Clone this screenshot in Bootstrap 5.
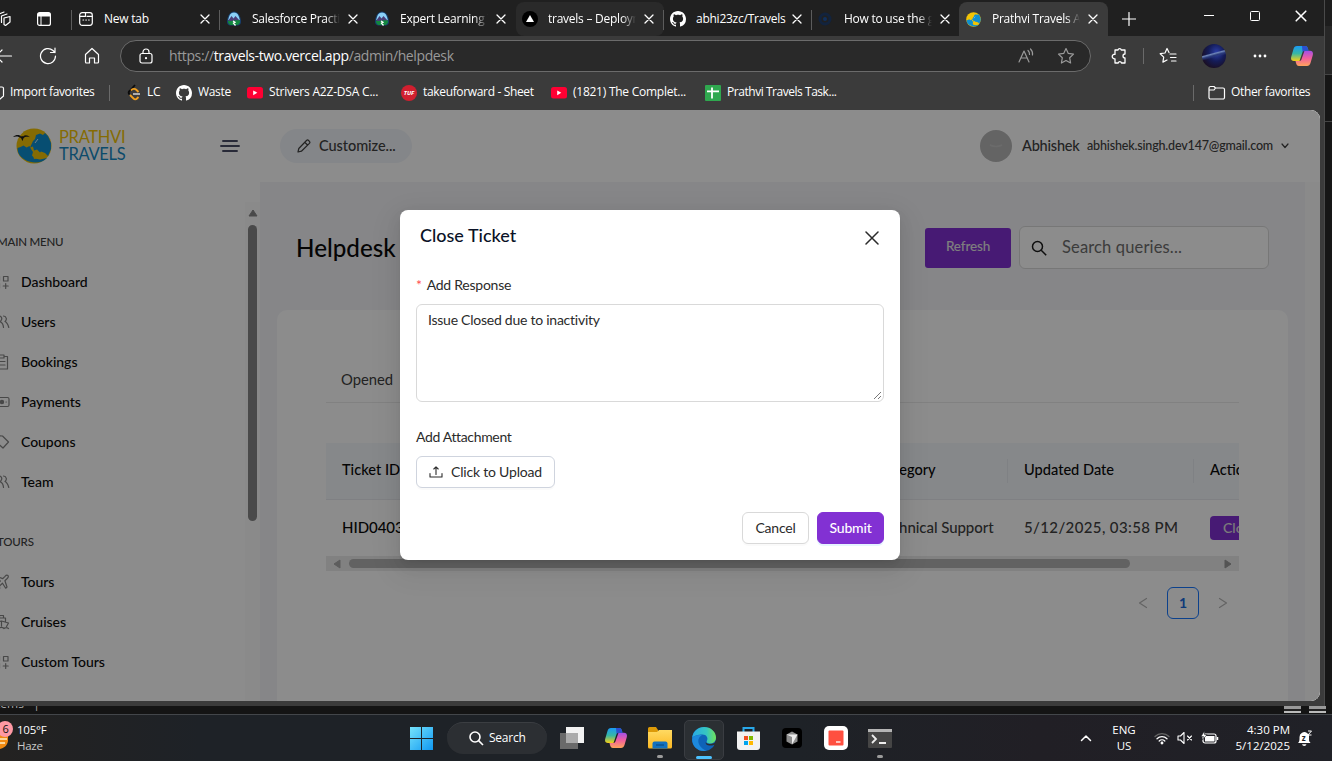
<!DOCTYPE html>
<html lang="en">
<head>
<meta charset="utf-8">
<title>Prathvi Travels Admin</title>
<link href="https://cdn.jsdelivr.net/npm/bootstrap@5.3.0/dist/css/bootstrap.min.css" rel="stylesheet">
<style>
:root{--ui:"Open Sans","Noto Sans",sans-serif;--app:Lato,"Liberation Sans",sans-serif;--purple:#8231d3;--canvas:#f4f5f8}
body{width:1332px;height:761px;overflow:hidden;background:#141414;font-family:var(--ui);font-size:12px;color:#fff;line-height:1.4;letter-spacing:-.25px}
svg{display:block;flex:none}
.ln{fill:none;stroke:currentColor;stroke-width:1.2;stroke-linecap:round;stroke-linejoin:round}
.desktop-area{height:706px}
.browser{width:1325px;background:#3b3b3b;border-right:1px solid #4a4a4a}
.behind{background:#161616}
.behind-a{height:26px;background:#1d1d1d}
.behind-b{height:49px;background:#272727;border-bottom:1px solid #444}
.behind-c{height:47px;border-bottom:1px solid #444}
/* tab strip */
.tabstrip{height:36px;background:#202020}
.lead-icons{width:72px;padding-left:0}
.tab{width:148px;height:34px;margin-top:2px;padding:0 10px 0 6px;position:relative}
.tab+.tab::before,.tab.first::before{content:"";position:absolute;left:-1px;top:8px;width:1px;height:20px;background:#5c5c5c}
.tab.nosep::before{display:none}
.tab.first{padding-left:7px}
.tab.hovered{background:#2a2a2a;border-radius:8px 8px 8px 8px}
.tab.current{background:#3b3b3b;border-radius:8px 8px 0 0;margin-left:-1px;width:149px;padding-left:7px}
.tab-label{width:90px;margin-left:10px;white-space:nowrap;overflow:hidden;-webkit-mask-image:linear-gradient(90deg,#000 74px,transparent 88px)}
.tab-label.full{-webkit-mask-image:none}
.tools{height:38px;margin-top:1px}
.url{width:971px;height:32px;border:1px solid #6b6b6b;border-radius:16px;background:#292929;font-size:14px;letter-spacing:-.38px;color:#9a9a9a;padding-left:17px}
.url b{font-weight:400;color:#fff}
.avatar-pic{width:24px;height:24px;border-radius:50%;background:linear-gradient(165deg,transparent 38%,#6f86b8 42%,#2a3a7a 48%,transparent 56%),radial-gradient(ellipse at 60% 35%,#2c3fa8 0,#141c58 40%,#1a0f24 75%,#0a1238 100%)}
.favs{height:35px;display:grid;grid-template-columns:10px 99px 17px 21px 29px 22px 49px 22px 132px 22px 128px 22px 132px 22px 466px 14px 24px 90px;align-items:center;white-space:nowrap;letter-spacing:-.34px}
.vr-line{width:1px;height:16px;background:#6a6a6a}
/* web page */
.webpage{width:1320px;height:591px;border-radius:0 9px 9px 0;overflow:hidden;position:relative;background:#fff;font-family:var(--app);color:#404040;letter-spacing:0}
.shade{position:absolute;inset:0;background:rgba(0,0,0,.45)}
.topbar{height:72px;background:#fff}
.brand{width:220px;padding-left:12px}
.brand-name{font-family:Lato,sans-serif;font-size:16.5px;line-height:17px;margin-left:6px;letter-spacing:-.3px}
.customize{width:132px;height:34px;border-radius:17px;background:#f1f4f9;font-size:14.5px;letter-spacing:-.05px;font-weight:500;color:#404040;margin-left:40px}
.user-dot{width:32px;height:32px;border-radius:50%;background:#b7b7b7}
.u-name{width:65px;font-size:14.5px;font-weight:500;letter-spacing:-.2px}
.u-mail{width:197px;font-size:12.5px;font-weight:500;letter-spacing:-.17px}
.side{width:260px;padding-top:20px;overflow:hidden}
.side-head{height:60px;padding-top:21px;font-size:11.5px;color:#404040;font-weight:500;letter-spacing:-.2px}
.side-item{height:40px;font-size:14px;font-weight:500;color:#0a0a0a}
.side-item span{margin-top:-1px;letter-spacing:-.04px}
.side-item svg{margin-left:-7px;margin-right:11px;color:#848484}
.side-scroll{width:15px;height:100%;background:#fcfcfc;padding-top:7px}
.side-thumb{width:9px;height:296px;background:#888;border-radius:5px;margin-top:8px}
.canvas{width:1045px;background:var(--canvas);padding:44px 36px 0}
.page-scroll{width:15px;background:#fbfbfb}
.page-title{font-size:24.2px;font-weight:500;color:#0a0a0a}
.btn-refresh{width:86px;height:40px;background:var(--purple);color:#e6e6e6;border-radius:3px;font-size:13.5px;letter-spacing:-.15px;font-weight:500;margin-top:2px}
.searchbox{width:250px;height:43px;background:#fff;border:1px solid #d9d9d9;border-radius:6px;font-size:16.5px;letter-spacing:.15px;color:#6d6d6d;padding-left:11px}
.panel{margin:41px -19px 0;height:400px;background:#fff;border-radius:10px;padding:47px 49px 0}
.tabs-line{height:46px;border-bottom:1px solid #ececec;font-size:14.8px;padding-left:15px}
.scroller{overflow:hidden;margin-top:40px;width:913px}
.tickets{width:1000px;table-layout:fixed;margin:0;border-collapse:separate;border-spacing:0;white-space:nowrap}
.tickets th{height:57px;padding:0 16px 1px;background:#f5f8fc;border-bottom:1px solid #e8eaee;font-size:14.6px;font-weight:500;color:#0a0a0a;position:relative;vertical-align:middle}
.tickets th+th::before{content:"";position:absolute;left:-1px;top:16px;height:24px;width:1px;background:#e8ebf0}
.tickets td{height:56px;padding:0 16px;font-size:15px;color:#404040;font-weight:500;vertical-align:middle}
.tickets .cell-text{padding-bottom:2px;letter-spacing:-.05px}
.tickets .stamp{letter-spacing:.37px}
.tickets td.ticket-no{color:#0a0a0a}
.btn-row{width:80px;height:24px;background:var(--purple);color:#e0e0e0;border-radius:4px;padding-left:13px;font-size:14px;line-height:24px}
.hscroll{height:15px;background:#ececec;padding:0 7px}
.hthumb{width:781px;height:9px;border-radius:5px;background:#b2b2b2}
.pager{padding:16px 0 0}
.pager-num{width:32px;height:32px;border:1px solid #1677ff;border-radius:6px;color:#1668dc;font-size:14px;font-weight:700;margin:0 8px}
/* dialog */
.ticket-dialog{position:absolute;left:400px;top:100px;width:500px;height:350px;border-radius:8px;background:#fff;padding:16px;color:#2b2b2b;font-size:14px;letter-spacing:-.25px;box-shadow:0 6px 16px rgba(0,0,0,.08),0 3px 6px -4px rgba(0,0,0,.12),0 9px 28px 8px rgba(0,0,0,.05)}
.dlg-title{font-size:18px;font-weight:500;letter-spacing:0;color:#0a1226;line-height:18px;padding-left:4px}
.dlg-label{line-height:22px;margin-top:30px}
.dlg-text{height:98px;border:1px solid #d9d9d9;border-radius:6px;padding:4px 11px;margin-top:8px;line-height:22px;position:relative}
.dlg-text svg{position:absolute;right:1px;bottom:1px}
.dbtn{height:32px;border:1px solid #d9d9d9;border-radius:6px;background:#fff;font-size:14px;letter-spacing:-.2px;color:#2b2b2b;padding:0 0 2px;box-shadow:0 2px 0 rgba(0,0,0,.02)}
.dbtn-main{background:var(--purple);border-color:var(--purple);color:#fff;font-weight:500;box-shadow:0 2px 0 rgba(5,145,255,.1)}
.w-up{width:139px;border-color:#cfd4de}.w-can{width:67px}
/* desktop */
.gapstrip{height:8px;overflow:hidden;background:#141414}
.peek{font-size:12px;line-height:14px;margin-top:-9px;color:#aaa;margin-left:-7px;letter-spacing:0}
.peek-ico{width:17px;height:7px;background:#999;box-shadow:inset 0 -2px 0 #bbb,inset 0 -4px 0 #222}
.taskbar{height:47px;border-top:1px solid #43464a;background:linear-gradient(90deg,#232221 0,#1e2227 15%,#1e2227 60%,#211f25 78%,#202127 100%)}
.weather{width:399px;padding-left:17px;position:relative;line-height:16px;font-size:11.5px}
.weather svg{position:absolute;left:0;top:-2px}
.slot{width:44px;height:46px;position:relative}
.slot.on{background:#2b2f33;border:1px solid #3a3d42;border-radius:5px;width:40px;height:40px;margin:3px 2px 0}
.slot i{position:absolute;bottom:3px;left:19px;width:6px;height:3px;border-radius:2px;background:#9b9b9b}
.slot.on i{left:11px;width:16px;bottom:0;background:#4cc2ff}
.tb-search{width:100px;height:32px;border-radius:16px;background:#2c2f33;border-top:1px solid #3b3e42;margin:0 3px 0 4px;font-size:12px}
.tray-text{line-height:16px;font-size:11.5px;letter-spacing:0;white-space:nowrap}
</style>
</head>
<body>
<svg width="0" height="0" class="position-absolute">
<defs>
<linearGradient id="gw" x1="0" y1="0" x2="1" y2="1"><stop offset="0" stop-color="#76e3fb"/><stop offset="1" stop-color="#1098f2"/></linearGradient>
<linearGradient id="gc1" x1="0" y1="0" x2="0" y2="1"><stop offset="0" stop-color="#1a9af5"/><stop offset=".5" stop-color="#37b7a5"/><stop offset="1" stop-color="#f7d014"/></linearGradient>
<linearGradient id="gc2" x1="0" y1="0" x2="0" y2="1"><stop offset="0" stop-color="#a34fe8"/><stop offset=".5" stop-color="#f2609c"/><stop offset="1" stop-color="#ffa45b"/></linearGradient>
<linearGradient id="ge1" x1="0" y1="0" x2="1" y2="0"><stop offset="0" stop-color="#29a9e6"/><stop offset=".6" stop-color="#36c6c0"/><stop offset="1" stop-color="#71e35a"/></linearGradient>
<linearGradient id="gf" x1="0" y1="0" x2="0" y2="1"><stop offset="0" stop-color="#ffda62"/><stop offset="1" stop-color="#fcb822"/></linearGradient>
</defs>
<symbol id="x" viewBox="0 0 10 10"><path class="ln" d="M1 1l8 8M9 1L1 9" style="stroke-width:1.3"/></symbol>
<symbol id="trail" viewBox="0 0 16 16"><path d="M8 .5c4 0 6 3.500 7 9 .5 3-1 4.500-3 5H4c-2-.5-3.500-2-3-5C2 4 4 .5 8 .5z" fill="#173d6b"/><path d="M8 1.500c3.500 0 5 3 5.800 7.500H2.200C3 4.500 4.500 1.500 8 1.500z" fill="#8ad0f7"/><path d="M2 10l3.500-5 2 2.500L9.500 5l4.500 5z" fill="#4b3f78"/><path d="M2 9.500c4 1.500 8-1 12 0 .3 2-.5 4-2.500 4.500h-7C2.500 13.500 1.800 11.500 2 9.500z" fill="#12873f"/><path d="M7 10l2 1.200-1.500 1 2 2.300" stroke="#fff" stroke-width="1.300" fill="none"/></symbol>
<symbol id="gh" viewBox="0 0 16 16"><path fill="#fff" d="M8 0C3.580 0 0 3.580 0 8c0 3.540 2.290 6.530 5.470 7.590.4.070.55-.17.55-.38 0-.19-.01-.82-.01-1.490-2.010.37-2.530-.49-2.690-.94-.09-.23-.48-.94-.82-1.130-.28-.15-.68-.52-.01-.53.630-.01 1.080.58 1.230.82.72 1.210 1.870.87 2.330.66.070-.52.28-.87.51-1.070-1.780-.2-3.640-.89-3.640-3.950 0-.87.31-1.590.82-2.150-.08-.2-.36-1.020.08-2.120 0 0 .67-.21 2.200.82.640-.18 1.320-.27 2-.27s1.360.09 2 .27c1.530-1.040 2.200-.82 2.200-.82.44 1.100.16 1.920.08 2.120.51.56.82 1.270.82 2.150 0 3.070-1.870 3.750-3.650 3.950.29.25.54.73.54 1.480 0 1.070-.01 1.930-.01 2.200 0 .21.15.46.55.38A8.010 8.010 0 0 0 16 8c0-4.420-3.580-8-8-8z"/></symbol>
<symbol id="yt" viewBox="0 0 16 12"><rect width="16" height="11.500" rx="2.500" fill="#ff0033"/><path d="M6.200 3.400v4.800L10.300 5.800z" fill="#fff"/></symbol>
<symbol id="copilot" viewBox="0 0 22 20"><path fill="url(#gc1)" d="M6 0h8c1.800 0 2.600 1.200 3 3l.5 1.500H14c-1.500 0-2.200.8-2.600 2L8.500 15H3c-2.500 0-3.500-1.500-2.700-4.500L2.500 3C3 1 4.200 0 6 0z"/><path fill="url(#gc2)" d="M16 20H8c-1.800 0-2.400-1-3-3l-.5-2H8c1.500 0 2.200-.5 2.600-2L13.500 4.800H19c2.500 0 3.500 1.700 2.700 4.700L19.500 17c-.6 2-1.700 3-3.500 3z"/><path fill="#2b4fd0" d="M11 0h3c1.800 0 2.600 1.200 3 3l.5 1.800H14c-1 0-1.800.4-2.400 1.500z"/></symbol>
<symbol id="grid4" viewBox="0 0 16 16"><path class="ln" d="M2 2.500h4v4H2zM10 2.500h4.500v4.500H10zM2 9.500h4v4.500H2zM12.200 9.500v5M9.700 12h5"/></symbol>
<symbol id="people" viewBox="0 0 16 16"><path class="ln" d="M5 2a2.700 2.700 0 0 1 2.500 4.500L7 8c2 .8 2.800 2.800 3 5.500M5 2a2.700 2.700 0 0 0-2.300 4.500L4 8c-2 .8-3 2.800-3.200 5.500M10 2c3.200.2 3.700 4 1.500 5.500 2.300 1 3 3 3.800 6"/></symbol>
<symbol id="globe" viewBox="0 0 36 36"><circle cx="18" cy="18" r="17.500" fill="#f2c406"/><path fill="#0e8fd0" d="M2 24l-.5-4 3-1 3-1.500 3 2 3-1.500 1.500 3 2 3-1 3.500 3 3 5 1 7-1.500C24 38 6 35 2 24zM17 13l2-2 1-4 4-1.500 3 1.500 2-2 3 3 3 7v6l-3 7-3-3-4-1.500-1 1-3-3-3 1-1-4-3 1z"/><path fill="#f2c406" d="M17 27l4-2 3 .5 2-1.500 2 4-2 3-4-1-4 1z"/><path d="M19 15l3-4" stroke="#fff" stroke-width=".8"/></symbol>
</svg>

<div class="desktop-area d-flex">
 <div class="browser d-flex flex-column">
  <div class="tabstrip d-flex align-items-start">
   <div class="lead-icons d-flex align-items-center" style="height:38px">
    <svg width="12" height="16" viewBox="0 0 12 16" class="ln"><path d="M4 7l6-1.500V11L5.500 14.500 4 13.500zM1.500 11.500V5L7 3M-1 9V3L4 1"/></svg>
    <svg width="14" height="14" viewBox="0 0 14 14" style="margin-left:25px"><rect x=".6" y=".6" width="12.800" height="12.800" rx="2" class="ln"/><path d="M1 1h12v3.500H1z" fill="#fff"/><path d="M4 4v9" stroke="#fff"/></svg>
   </div>
   <div class="tab first d-flex align-items-center"><svg width="14" height="14" viewBox="0 0 14 14" class="ln"><rect x=".7" y=".7" width="12.600" height="12.600" rx="2.500"/><path d="M1 4.300h5.500V1M8 4.300h5M4 8h.6M6.800 8h.6M9.600 8h.6"/></svg><span class="tab-label full" style="margin-left:11px">New tab</span><svg class="ms-auto" width="10" height="10"><use href="#x"/></svg></div>
   <div class="tab d-flex align-items-center"><svg width="16" height="16"><use href="#trail"/></svg><span class="tab-label">Salesforce Practice</span><svg class="ms-auto" width="10" height="10"><use href="#x"/></svg></div>
   <div class="tab nosep d-flex align-items-center"><svg width="16" height="16"><use href="#trail"/></svg><span class="tab-label">Expert Learning T</span><svg class="ms-auto" width="10" height="10"><use href="#x"/></svg></div>
   <div class="tab hovered nosep d-flex align-items-center"><svg width="16" height="16" viewBox="0 0 16 16"><circle cx="8" cy="8" r="8" fill="#000"/><path d="M8 4l4 7H4z" fill="#fff"/></svg><span class="tab-label">travels – Deployments</span><svg class="ms-auto" width="10" height="10"><use href="#x"/></svg></div>
   <div class="tab d-flex align-items-center"><svg width="16" height="16"><use href="#gh"/></svg><span class="tab-label full">abhi23zc/Travels</span><svg class="ms-auto" width="10" height="10"><use href="#x"/></svg></div>
   <div class="tab d-flex align-items-center"><svg width="16" height="16" viewBox="0 0 16 16"><circle cx="7" cy="8" r="5" fill="none" stroke="#12233d" stroke-width="3"/><circle cx="7" cy="8" r="2" fill="#10305e"/></svg><span class="tab-label">How to use the group</span><svg class="ms-auto" width="10" height="10"><use href="#x"/></svg></div>
   <div class="tab current nosep d-flex align-items-center"><svg width="15" height="15" style="margin-right:1px"><use href="#globe"/></svg><span class="tab-label">Prathvi Travels Admin</span><svg class="ms-auto" width="10" height="10"><use href="#x"/></svg></div>
   <svg width="14" height="14" viewBox="0 0 14 14" style="margin:12px 0 0 14px"><path class="ln" d="M7 .5v13M.5 7h13"/></svg>
   <svg width="10" height="10" viewBox="0 0 10 10" style="margin:11px 0 0 68px"><path d="M0 4.500h10" stroke="#fff"/></svg>
   <svg width="10" height="10" viewBox="0 0 10 10" style="margin:11px 0 0 36px"><rect x=".5" y=".5" width="9" height="9" rx="1" fill="none" stroke="#fff"/></svg>
   <svg width="12" height="12" style="margin:10px 0 0 35px"><use href="#x"/></svg>
  </div>
  <div class="tools d-flex align-items-center">
   <svg width="14" height="16" viewBox="0 0 14 16" class="ln"><path d="M-1 8h12.500M-4 8l6-6M-4 8l6 6"/></svg>
   <svg width="18" height="18" viewBox="0 0 18 18" class="ln" style="margin-left:25px"><path d="M16.500 9A7.500 7.500 0 1 1 14 3.500L16 5.500M16 1v4.500h-4.500"/></svg>
   <svg width="18" height="18" viewBox="0 0 18 18" class="ln" style="margin-left:26px"><path d="M2.500 7.500L9 1.500l6.500 6V15a1 1 0 0 1-1 1h-3v-5h-5v5h-3a1 1 0 0 1-1-1z"/></svg>
   <div class="url d-flex align-items-center" style="margin-left:19px">
    <svg width="16" height="16" viewBox="0 0 16 16" class="ln text-white"><rect x="2" y="5.500" width="12" height="9.500" rx="2"/><path d="M5 5.500V4a3 3 0 0 1 6 0v1.500"/><circle cx="8" cy="10.200" r=".5"/></svg>
    <span style="margin-left:15px">https://<b>travels-two.vercel.app</b>/admin/helpdesk</span>
    <svg class="ln ms-auto" width="17" height="16" viewBox="0 0 17 16"><path d="M1 14L6 3l5 11M2.800 10h6.400M10 2.500a5 5 0 0 1 1.500 4M12.500 1a7 7 0 0 1 2 6"/></svg>
    <svg class="ln" width="18" height="18" viewBox="0 0 18 18" style="margin:0 15px 0 22px"><path d="M9 1.500l2.300 4.900 5.200.7-3.800 3.700.9 5.200L9 13.500 4.400 16l.9-5.200L1.500 7.100l5.200-.7z"/></svg>
   </div>
   <svg class="ln" width="18" height="18" viewBox="0 0 18 18" style="margin-left:19px;stroke-width:1.300"><path d="M5 3h3a1.700 1.700 0 0 1 3.300 0H15v4a2 2 0 1 0 0 4v5h-3.500a1.700 1.700 0 0 0-3.300 0H5v-4.200a2.300 2.300 0 1 1 0-4.500z"/></svg>
   <div class="vr-line" style="margin-left:15px"></div>
   <svg class="ln" width="18" height="18" viewBox="0 0 18 18" style="margin-left:15px"><path d="M10 5.500L8 1.500 6 6l-4.800.7 3.500 3.400-.8 5L8 13M11 7h6M11.500 10.500H17M12.500 14H17"/></svg>
   <div class="avatar-pic" style="margin-left:25px"></div>
   <svg width="16" height="4" viewBox="0 0 16 4" fill="#fff" style="margin-left:26px"><circle cx="3" cy="2" r="1.400"/><circle cx="8" cy="2" r="1.400"/><circle cx="13" cy="2" r="1.400"/></svg>
   <svg width="22" height="20" style="margin-left:23px"><use href="#copilot"/></svg>
  </div>
  <div class="favs">
   <svg class="ln" width="5" height="14" viewBox="0 0 5 14"><path d="M0 1h2a1.500 1.500 0 0 1 1.500 1.500V9M0 13l3.500-3"/></svg><span>Import favorites</span><div class="vr-line"></div>
   <svg width="16" height="17" viewBox="0 0 16 17" fill="none" stroke-width="1.800"><path d="M9 1L3.500 7a2.500 2.500 0 0 0 0 3.500" stroke="#0b0b0b"/><path d="M4 11l3.500 3.500c1 1 2.500 1 3.500 0l1.500-1.500M5 6.500c1.500-2 4-2 5.500-.5l2 2" stroke="#f0a020"/><path d="M7 10h7" stroke="#bbb"/></svg><span>LC</span>
   <svg width="16" height="16"><use href="#gh"/></svg><span>Waste</span>
   <svg width="16" height="12"><use href="#yt"/></svg><span style="letter-spacing:-.2px">Strivers A2Z-DSA C...</span>
   <svg width="16" height="16" viewBox="0 0 16 16"><circle cx="8" cy="8" r="8" fill="#d11f2f"/><text x="8" y="10.300" font-size="6" font-weight="700" font-style="italic" fill="#fff" text-anchor="middle" letter-spacing="0">TUF</text></svg><span>takeuforward - Sheet</span>
   <svg width="16" height="12"><use href="#yt"/></svg><span style="letter-spacing:-.25px">(1821) The Complet...</span>
   <svg width="16" height="16" viewBox="0 0 16 16"><rect width="16" height="16" rx="1" fill="#2fa84f"/><path d="M7 2.500v11M2 6.300h12" stroke="#fff" stroke-width="1.800"/></svg><span style="letter-spacing:-.46px">Prathvi Travels Task...</span>
   <div class="vr-line"></div><svg class="ln" width="18" height="15" viewBox="0 0 18 15" style="margin-left:1px"><path d="M1 3a1.500 1.500 0 0 1 1.500-1.500H6L7.500 3H15a1.500 1.500 0 0 1 1.500 1.500v8A1.500 1.500 0 0 1 15 14H2.500A1.500 1.500 0 0 1 1 12.500zM1 5h5l1.500-2"/></svg><span>Other favorites</span>
  </div>

  <div class="webpage">
   <div class="topbar d-flex align-items-center">
    <div class="brand d-flex align-items-center">
     <svg width="41" height="36" viewBox="0 0 41 36"><use href="#globe" x="4" y="0" width="36" height="36"/><path d="M1 9c3-2.500 6-2.500 8-.5.8-.8 1.500-.8 2 0 2-2 5-1.500 7 .8-3-.8-5-.5-6.500 1l-1 2.700-1.500-3C7 8.500 4 8 1 9z" fill="#1c1c1c"/></svg>
     <div class="brand-name"><div style="color:#f2c406">PRATHVI</div><div style="color:#1689c4">TRAVELS</div></div>
    </div>
    <svg width="20" height="14" viewBox="0 0 20 14" stroke="#4a4d66" stroke-width="1.900" stroke-linecap="round"><path d="M3 2h14M1 7h18M3 12h14"/></svg>
    <div class="customize d-flex align-items-center"><svg class="ln" width="14" height="14" viewBox="0 0 14 14" style="margin:0 8px 0 17px"><path d="M1 13l.8-3.500 7.700-8a1.500 1.500 0 0 1 2.100 0l.8.8a1.500 1.500 0 0 1 0 2.100l-8 7.800zM8 3.500L10.500 6"/></svg><span>Customize...</span></div>
    <div class="user-dot d-flex align-items-center justify-content-center" style="margin-left:568px"><svg width="14" height="4"><path d="M1 1q6 3 12 0" stroke="#c4c4c4" fill="none" stroke-width="1.500"/></svg></div>
    <span class="u-name" style="margin-left:10px">Abhishek</span>
    <span class="u-mail">abhishek.singh.dev147@gmail.com</span>
    <svg class="ln" width="8" height="6" viewBox="0 0 8 6" style="margin-left:-3px"><path d="M1 1l3 3.500L7 1"/></svg>
   </div>
   <div class="d-flex" style="height:519px">
    <div class="side d-flex">
     <div class="flex-grow-1">
      <div class="side-head d-flex align-items-center" style="margin-left:-3px">MAIN MENU</div>
      <div class="side-item d-flex align-items-center"><svg width="17" height="16"><use href="#grid4"/></svg><span>Dashboard</span></div>
      <div class="side-item d-flex align-items-center"><svg width="17" height="16"><use href="#people"/></svg><span>Users</span></div>
      <div class="side-item d-flex align-items-center"><svg width="17" height="16" viewBox="0 0 16 16" class="ln"><path d="M5 2.500H2.500V15h11.500V2.500H11M5.500 1h5v3h-5zM5.500 7.500h6M5.500 11h6"/></svg><span>Bookings</span></div>
      <div class="side-item d-flex align-items-center"><svg width="17" height="16" viewBox="0 0 16 16" class="ln"><rect x="-4" y="3.500" width="19.500" height="9" rx="1.500"/><circle cx="8.500" cy="8" r="1.600" fill="currentColor"/><path d="M12.500 8h.3"/></svg><span>Payments</span></div>
      <div class="side-item d-flex align-items-center"><svg width="17" height="16" viewBox="0 0 16 16" class="ln"><path d="M1.500 1.500L9 2l6 6-5.500 6L1.500 7zM5.500 5h.4"/></svg><span>Coupons</span></div>
      <div class="side-item d-flex align-items-center"><svg width="17" height="16"><use href="#people"/></svg><span>Team</span></div>
      <div class="side-head d-flex align-items-center" style="margin-left:-3px">TOURS</div>
      <div class="side-item d-flex align-items-center"><svg width="17" height="16" viewBox="0 0 16 16" class="ln"><path d="M14.500 1.500c-1-.8-2.300 0-3 .8L9.300 4.600 3 2.500 1.800 3.800l5 3.200L4 10l-2.500-.3-1 1L3.800 12l1.400 3.500 1-1L6 12l3-2.800 3.200 5 1.300-1.200-2.100-6.300L13.700 4.500c.8-.8 1.500-2 .8-3z"/></svg><span>Tours</span></div>
      <div class="side-item d-flex align-items-center"><svg width="17" height="16" viewBox="0 0 16 16" class="ln"><path d="M6 1.500h4v2.500H6zM4 8V4h8v4M1 9l7-2 7 2-2 3.500M8 7v5M0 14.500c2-1.500 3-1.500 5 0 2-1.500 4-1.500 5.500 0 1.500-1.200 3-1.200 4.500 0"/></svg><span>Cruises</span></div>
      <div class="side-item d-flex align-items-center"><svg width="17" height="16"><use href="#grid4"/></svg><span>Custom Tours</span></div>
     </div>
     <div class="side-scroll d-flex flex-column align-items-center"><svg width="10" height="8" viewBox="0 0 10 8"><path d="M5 1l4 6H1z" fill="#888" stroke="#888" stroke-linejoin="round"/></svg><div class="side-thumb"></div></div>
    </div>
    <div class="canvas">
     <div class="d-flex align-items-start">
      <div class="page-title" style="line-height:43px">Helpdesk</div>
      <button class="btn btn-refresh border-0 px-0 pt-0 pb-1 ms-auto me-2">Refresh</button>
      <div class="searchbox d-flex align-items-center"><svg width="16" height="16" viewBox="0 0 16 16" fill="none" stroke="#1c1c1c" stroke-width="1.500" style="margin-right:15px"><circle cx="6.500" cy="6.500" r="5"/><path d="M10.200 10.200l5 5"/></svg>Search queries...</div>
     </div>
     <div class="panel">
      <div class="tabs-line d-flex align-items-center">Opened</div>
      <div class="scroller">
       <table class="tickets">
        <colgroup><col style="width:535px"><col style="width:147px"><col style="width:186px"><col style="width:132px"></colgroup>
        <thead><tr><th>Ticket ID</th><th>Category</th><th>Updated Date</th><th>Action</th></tr></thead>
        <tbody><tr><td class="ticket-no"><div class="cell-text">HID0403</div></td><td><div class="cell-text">Technical Support</div></td><td><div class="cell-text stamp">5/12/2025, 03:58 PM</div></td><td><div class="btn-row">Close</div></td></tr></tbody>
       </table>
      </div>
      <div class="hscroll d-flex align-items-center"><svg width="8" height="10" viewBox="0 0 8 10"><path d="M1 5l6-4v8z" fill="#a9a9a9" stroke="#a9a9a9" stroke-linejoin="round"/></svg><div class="hthumb" style="margin-left:8px"></div><svg class="ms-auto" width="8" height="10" viewBox="0 0 8 10"><path d="M7 5L1 1v8z" fill="#999" stroke="#999" stroke-linejoin="round"/></svg></div>
      <div class="pager d-flex align-items-center justify-content-end">
       <svg class="ln" width="32" height="12" viewBox="0 0 32 12" style="color:#b5b5b5"><path d="M19.500 1.500L12.500 6l7 4.500"/></svg>
       <div class="pager-num d-flex align-items-center justify-content-center">1</div>
       <svg class="ln" width="32" height="12" viewBox="0 0 32 12" style="color:#b5b5b5"><path d="M12.500 1.500L19.500 6l-7 4.500"/></svg>
      </div>
     </div>
    </div>
    <div class="page-scroll"></div>
   </div>
   <div class="shade"></div>
   <div class="ticket-dialog">
    <div class="d-flex justify-content-between" style="height:18px"><div class="dlg-title">Close Ticket</div><svg class="ln" width="14" height="14" viewBox="0 0 14 14" style="margin:5px 5px 0 0;stroke-width:1.500"><path d="M1 1l12 12M13 1L1 13"/></svg></div>
    <div class="dlg-label"><span style="color:#ff4d4f;margin-right:5px">*</span>Add Response</div>
    <div class="dlg-text">Issue Closed due to inactivity<svg width="9" height="9" viewBox="0 0 9 9" stroke="#555" stroke-width=".8"><path d="M1 8l7-7M5 8l3-3"/></svg></div>
    <div class="dlg-label" style="margin-top:24px;letter-spacing:-.35px">Add Attachment</div>
    <button class="btn dbtn w-up d-flex align-items-center" style="margin-top:8px"><svg class="ln" width="14" height="14" viewBox="0 0 14 14" style="margin:1px 8px 0 12px;stroke-width:1.100"><path d="M1 8.500v3.500h12V8.500M7 9.500V2M4.800 4L7 1.800 9.200 4"/></svg>Click to Upload</button>
    <div class="d-flex justify-content-end gap-2" style="margin-top:24px"><button class="btn dbtn w-can">Cancel</button><button class="btn dbtn dbtn-main w-can">Submit</button></div>
   </div>
  </div>
 </div>
 <div class="behind flex-grow-1"><div class="behind-a"></div><div class="behind-b"></div><div class="behind-c"></div></div>
</div>
<div class="gapstrip d-flex justify-content-between"><div class="peek">items &nbsp; |</div><div class="d-flex gap-2" style="margin-right:6px"><div class="peek-ico"></div><div class="peek-ico"></div></div></div>

<div class="taskbar d-flex align-items-center">
 <div class="weather"><svg width="13" height="30" viewBox="0 0 13 30"><path d="M0 12h8v8c-1 5-4 7-8 8z" fill="#f08a12"/><path d="M0 18h7M0 22h5" stroke="#fff0c8" stroke-width="1.500"/><circle cx="5" cy="8" r="8" fill="#ff99a4"/><text x="5.500" y="12" font-size="11" text-anchor="middle" fill="#111">6</text></svg><div style="margin-top:-1px">105°F</div><div style="color:#c8c8c8">Haze</div></div>
 <div class="slot d-flex align-items-center justify-content-center"><svg width="23" height="23" viewBox="0 0 23 23" fill="url(#gw)"><path d="M0 0h11v11H0zM12 0h11v11H12zM0 12h11v11H0zM12 12h11v11H12z"/></svg></div>
 <div class="tb-search d-flex align-items-center"><svg width="15" height="15" viewBox="0 0 15 15" fill="none" stroke="#fff" stroke-width="1.600" style="margin:0 5px 0 22px"><circle cx="6" cy="6" r="5"/><path d="M9.600 9.600l4.400 4.400"/></svg>Search</div>
 <div class="slot d-flex align-items-center justify-content-center"><svg width="24" height="22" viewBox="0 0 24 22"><path d="M6 0h18v16H6z" fill="#f2f2f2"/><path d="M0 6h18v16H0z" fill="#6a6a6a"/><path d="M6 6h12v10H6z" fill="#ababab"/></svg></div>
 <div class="slot d-flex align-items-center justify-content-center"><svg width="22" height="20"><use href="#copilot"/></svg></div>
 <div class="slot d-flex align-items-center justify-content-center"><svg width="24" height="22" viewBox="0 0 24 22"><path d="M0 1.500A1.500 1.500 0 0 1 1.500 0H8l2 3v3H0z" fill="#dc9a08"/><path d="M0 5h9l2-2h13v17a1.500 1.500 0 0 1-1.500 1.500h-21A1.500 1.500 0 0 1 0 20z" fill="url(#gf)"/><path d="M4.500 21.500V16.500a2 2 0 0 1 2-2h11a2 2 0 0 1 2 2v5z" fill="#1371bf"/><path d="M8 18h8" stroke="#0c5391" stroke-width="1.500"/></svg><i></i></div>
 <div class="slot on d-flex align-items-center justify-content-center"><svg width="24" height="24" viewBox="0 0 24 24" style="margin-top:-1px"><circle cx="12" cy="12" r="12" fill="#0f63b8"/><path d="M.2 11C1 4 6 0 12 0c7 0 12 5 12 10.500 0 4-3 6-6 6-2.500 0-4-1.200-3.200-2.500 1.800-3-.3-6.500-4.300-6.500C6 7.500 1.500 9 .2 11z" fill="url(#ge1)"/><path d="M.1 12C1 9 5 7.500 10 8.200c-3.500 1.300-5 6-2.500 10 1.500 2.500 4.500 4.800 7.500 5.400C7 25.500 0 20 .1 12z" fill="#1d88dc"/><path d="M14 14.500c-1 2 3 3.500 8.500 1.500l1.500-3v6l-2-1c-5 1.500-9.500 0-8-3.500z" fill="#2b2f33"/></svg><i></i></div>
 <div class="slot d-flex align-items-center justify-content-center"><svg width="23" height="23" viewBox="0 0 23 23"><path d="M6.500 6V1h10v5" fill="none" stroke="#28a8ea" stroke-width="2"/><path d="M0 4.500h23V20a3 3 0 0 1-3 3H3a3 3 0 0 1-3-3z" fill="#f2f2f2"/><path d="M7 9h4v4H7z" fill="#f25022"/><path d="M12 9h4v4h-4z" fill="#7fba00"/><path d="M7 14h4v4H7z" fill="#00a4ef"/><path d="M12 14h4v4h-4z" fill="#ffb900"/></svg></div>
 <div class="slot d-flex align-items-center justify-content-center"><svg width="20" height="20" viewBox="0 0 20 20"><rect width="20" height="20" rx="4" fill="#000"/><path d="M10 3.500l5.500 3v7L10 16.500l-5.500-3v-7z" fill="#8d8d8d"/><path d="M4.500 6.500h11L10 16.500V9z" fill="#eee"/></svg></div>
 <div class="slot d-flex align-items-center justify-content-center"><svg width="24" height="24" viewBox="0 0 24 24"><rect width="24" height="24" rx="5" fill="#fff"/><rect x="4.500" y="4.500" width="15" height="15" rx="1" fill="#ff4f40"/><path d="M12 16h4.500" stroke="#fff" stroke-width="1.300"/></svg></div>
 <div class="slot d-flex align-items-center justify-content-center"><svg width="24" height="19" viewBox="0 0 24 19"><rect width="24" height="19" rx="1" fill="#454545"/><path d="M0 0h24v3H0z" fill="#b5b5b5"/><path d="M4 6l4 4-4 4M11 14h7" fill="none" stroke="#eee" stroke-width="1.800"/></svg><i></i></div>
 <svg class="ln" width="12" height="8" viewBox="0 0 12 8" style="margin-left:178px;stroke-width:1.500"><path d="M1.500 6.500L6 2l4.500 4.500"/></svg>
 <div class="tray-text text-center" style="width:40px;margin-left:12px">ENG<br>US</div>
 <svg class="ln" width="16" height="14" viewBox="0 0 16 14" style="margin-left:10px;stroke-width:1.300"><path d="M1 5.500a10 10 0 0 1 14 0" stroke="#666"/><path d="M3 7.800a7 7 0 0 1 10 0M5.200 10a4 4 0 0 1 5.600 0"/><circle cx="8" cy="12" r=".8" fill="#fff"/></svg>
 <svg class="ln" width="16" height="14" viewBox="0 0 16 14" style="margin-left:7px;stroke-width:1.100"><path d="M1 5h2.500L7 1.500v11L3.500 9H1zM10.500 5l4 4M14.500 5l-4 4"/></svg>
 <svg width="18" height="14" viewBox="0 0 18 14" style="margin-left:8px"><rect x="2" y="3" width="13" height="9" rx="2" class="ln"/><rect x="4" y="5" width="9.500" height="5.500" fill="#fff"/><path d="M16.500 6v3" stroke="#fff" stroke-width="1.500"/><path d="M3.500 0L0 5.500h2.500L1.500 9 6 3.500H3.500z" fill="#fff" stroke="#202127" stroke-width=".6"/></svg>
 <div class="tray-text text-end" style="width:70px;margin-left:1px">4:30 PM<br>5/12/2025</div>
 <svg width="16" height="17" viewBox="0 0 16 17" style="margin-left:7px"><path d="M1 13c1.500-1 1.500-3 1.500-6A4.800 4.800 0 0 1 10 3l2 2v5c0 1.500 1 2 1.500 3zM5 14.200h4.500a2.300 2.300 0 0 1-4.500 0z" fill="#fff"/><text x="4.800" y="10.500" font-size="8" font-weight="700" fill="#202127">z</text><path d="M11 1h3.500L11 5h3.500" stroke="#fff" fill="none"/></svg>
</div>
<script src="https://cdn.jsdelivr.net/npm/bootstrap@5.3.0/dist/js/bootstrap.bundle.min.js"></script>
</body>
</html>
